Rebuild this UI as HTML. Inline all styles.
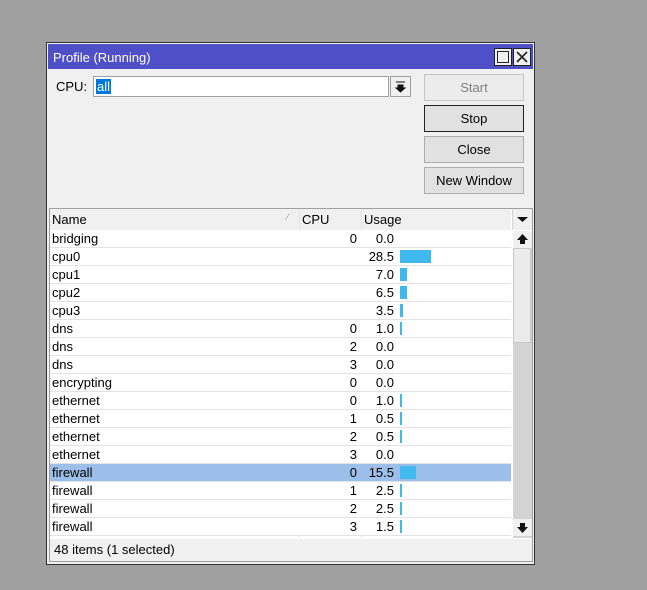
<!DOCTYPE html>
<html><head><style>
body{margin:0;width:647px;height:590px;background:#a0a0a0;font-family:"Liberation Sans",sans-serif;font-size:13px;position:relative;overflow:hidden}
.win{position:absolute;left:46px;top:42px;width:487px;height:521px;border:1px solid #333;background:#f0f0f0}
.title{position:absolute;left:1px;top:1px;right:1px;height:25px;background:#4f50c8;color:#fff;font-size:13px;line-height:27px;padding-left:5px}
.tb{position:absolute;top:4px;width:18px;height:18px;border:1px solid #222;background:#f0f0f0;box-sizing:border-box}
.abs{position:absolute}
.btn{position:absolute;left:377px;width:100px;height:27px;border:1px solid #adadad;background:#e1e1e1;box-sizing:border-box;text-align:center;line-height:25px;font-size:13px}
.row{position:absolute;left:3px;width:461px;height:18px;border-bottom:1px solid #e3e3e3;background:#fff;box-sizing:border-box}
.row span{position:absolute;top:1px;line-height:16px}
.n{left:2px}.c{right:154px;text-align:right}.u{left:310px;width:34px;text-align:right}
.bar{position:absolute;left:350px;top:2px;height:13px;background:#3fb9ee}
.sel{background:#9bbfe8}
.arr{position:absolute;background:#f0f0f0}
</style></head><body>
<div class="win">
<div class="title">Profile (Running)
<div class="tb" style="right:21px"><div style="position:absolute;left:2px;top:2px;width:10px;height:10px;border:1px solid #222"></div></div>
<div class="tb" style="right:2px"><svg width="16" height="16" style="position:absolute;left:0;top:0"><path d="M3 3L13 13M13 3L3 13" stroke="#222" stroke-width="1.6"/></svg></div>
</div>
<div class="abs" style="left:9px;top:36px">CPU:</div>
<div class="abs" style="left:46px;top:33px;width:296px;height:21px;border:1px solid #a0a0a0;background:#fff;box-sizing:border-box"><span style="position:absolute;left:2px;top:2px;background:#0078d7;color:#fff;line-height:15px;padding:0 1px">all</span></div>
<div class="abs" style="left:343px;top:33px;width:21px;height:21px;border:1px solid #a0a0a0;background:#f0f0f0;box-sizing:border-box"><svg width="19" height="19" style="position:absolute;left:0;top:0"><path d="M5 5H14M7 8H12V11H14L9.5 15L5 11H7Z" fill="#111" stroke="#111" stroke-width="1"/></svg></div>
<div class="btn" style="top:31px;color:#808080;background:#ececec;border-color:#c5c5c5">Start</div>
<div class="btn" style="top:62px;border:1px solid #222">Stop</div>
<div class="btn" style="top:93px">Close</div>
<div class="btn" style="top:124px">New Window</div>
<div class="abs" style="left:2px;top:165px;width:482px;height:330px;border:1px solid #a0a0a0;background:#fff"></div>
<div class="abs" style="left:3px;top:166px;width:461px;height:21px;background:#f0f0f0;border-bottom:1px solid #d5d5d5"></div>
<div class="abs" style="left:252px;top:166px;width:1px;height:329px;background:#e3e3e3"></div>
<div class="abs" style="left:314px;top:166px;width:1px;height:329px;background:#e3e3e3"></div>
<div class="abs" style="left:5px;top:169px">Name</div>
<div class="abs" style="left:240px;top:169px;font-size:9px;color:#999">⁄</div>
<div class="abs" style="left:255px;top:169px">CPU</div>
<div class="abs" style="left:317px;top:169px">Usage</div>
<div class="abs" style="left:465px;top:166px;width:19px;height:21px;background:#f0f0f0;border-left:1px solid #d5d5d5"><svg width="19" height="21"><path d="M4 8H15L9.5 13Z" fill="#111"/></svg></div>
<div class="abs" style="left:466px;top:188px;width:19px;height:307px;background:#d4d4d4"></div>
<div class="abs" style="left:466px;top:205px;width:18px;height:95px;background:#ebebeb;border:1px solid #c8c8c8;box-sizing:border-box"></div>
<div class="arr" style="left:466px;top:188px;width:19px;height:17px"><svg width="19" height="17"><path d="M9.5 3L15 9H12V13H7V9H4Z" fill="#111"/></svg></div>
<div class="arr" style="left:466px;top:476px;width:19px;height:17px"><svg width="19" height="17"><path d="M9.5 14L15 8H12V4H7V8H4Z" fill="#111"/></svg></div>
<div class="row" style="top:187px"><span class="n">bridging</span><span class="c">0</span><span class="u">0.0</span></div>
<div class="row" style="top:205px"><span class="n">cpu0</span><span class="u">28.5</span><div class="bar" style="width:31px"></div></div>
<div class="row" style="top:223px"><span class="n">cpu1</span><span class="u">7.0</span><div class="bar" style="width:7px"></div></div>
<div class="row" style="top:241px"><span class="n">cpu2</span><span class="u">6.5</span><div class="bar" style="width:7px"></div></div>
<div class="row" style="top:259px"><span class="n">cpu3</span><span class="u">3.5</span><div class="bar" style="width:3px"></div></div>
<div class="row" style="top:277px"><span class="n">dns</span><span class="c">0</span><span class="u">1.0</span><div class="bar" style="width:2px"></div></div>
<div class="row" style="top:295px"><span class="n">dns</span><span class="c">2</span><span class="u">0.0</span></div>
<div class="row" style="top:313px"><span class="n">dns</span><span class="c">3</span><span class="u">0.0</span></div>
<div class="row" style="top:331px"><span class="n">encrypting</span><span class="c">0</span><span class="u">0.0</span></div>
<div class="row" style="top:349px"><span class="n">ethernet</span><span class="c">0</span><span class="u">1.0</span><div class="bar" style="width:2px"></div></div>
<div class="row" style="top:367px"><span class="n">ethernet</span><span class="c">1</span><span class="u">0.5</span><div class="bar" style="width:2px"></div></div>
<div class="row" style="top:385px"><span class="n">ethernet</span><span class="c">2</span><span class="u">0.5</span><div class="bar" style="width:2px"></div></div>
<div class="row" style="top:403px"><span class="n">ethernet</span><span class="c">3</span><span class="u">0.0</span></div>
<div class="row sel" style="top:421px"><span class="n">firewall</span><span class="c">0</span><span class="u">15.5</span><div class="bar" style="width:16px"></div></div>
<div class="row" style="top:439px"><span class="n">firewall</span><span class="c">1</span><span class="u">2.5</span><div class="bar" style="width:2px"></div></div>
<div class="row" style="top:457px"><span class="n">firewall</span><span class="c">2</span><span class="u">2.5</span><div class="bar" style="width:2px"></div></div>
<div class="row" style="top:475px"><span class="n">firewall</span><span class="c">3</span><span class="u">1.5</span><div class="bar" style="width:2px"></div></div>
<div class="abs" style="left:2px;top:496px;width:484px;height:23px;border:1px solid #a0a0a0;border-top:none;box-sizing:border-box;background:#f0f0f0;padding-left:4px;line-height:22px">48 items (1 selected)</div>
</div>
</body></html>
